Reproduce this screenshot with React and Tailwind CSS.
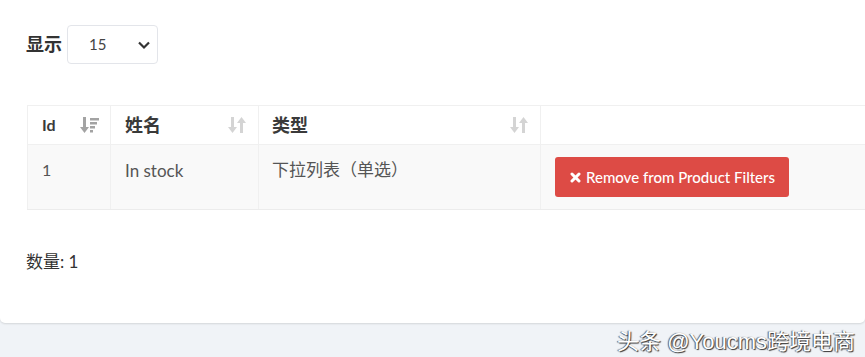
import React from "react";

const font = { fontFamily: 'Lato, "Noto Sans CJK SC", sans-serif' };

function SortBoth() {
  return (
    <svg width="18" height="20" viewBox="0 0 18 20" fill="#d4d4d4">
      <rect x="3" y="2" width="3" height="12" />
      <polygon points="0,12 9,12 4.5,18" />
      <rect x="12" y="6" width="3" height="12" />
      <polygon points="9,8 18,8 13.5,2" />
    </svg>
  );
}

function SortDesc() {
  return (
    <svg width="20" height="20" viewBox="0 0 20 20" fill="#a3a3a3">
      <rect x="3" y="2" width="3" height="12" />
      <polygon points="0,12 9,12 4.5,18" />
      <rect x="10" y="3" width="9" height="2.5" />
      <rect x="10" y="7" width="7" height="2.5" />
      <rect x="10" y="11" width="5" height="2.5" />
      <rect x="10" y="15" width="3" height="2.5" />
    </svg>
  );
}

export default function App() {
  return (
    <div className="w-[865px] h-[357px] bg-[#f0f3f7] overflow-hidden relative" style={font}>
      <div className="bg-white h-[323px] rounded-b-[5px] shadow-[0_1px_2px_rgba(0,0,0,0.12)] pl-[26px] pt-[25px]">
        <div className="flex items-center gap-[5px]">
          <span className="text-[18px] font-bold text-[#333]">显示</span>
          <div className="w-[91px] h-[39px] border border-[#e3e5ea] rounded-[4px] flex items-center justify-between pl-[21px] pr-[6px]">
            <span className="text-[15px] text-[#444]">15</span>
            <svg width="14" height="14" viewBox="0 0 14 14" fill="none" stroke="#333" strokeWidth="2.2">
              <polyline points="2,4.5 7,9.5 12,4.5" />
            </svg>
          </div>
        </div>

        <div className="mt-[41px] ml-[1px] flex flex-col">
          <div className="flex h-[40px] border-t border-b border-[#f0f0f0] bg-white">
            <div className="w-[84px] border-l border-r border-[#f0f0f0] flex items-center justify-between pl-[14px] pr-[10px]">
              <span className="text-[16px] font-bold text-[#3a3a3a]">Id</span>
              <SortDesc />
            </div>
            <div className="w-[148px] border-r border-[#f0f0f0] flex items-center justify-between pl-[14px] pr-[12px]">
              <span className="text-[18px] font-bold text-[#3a3a3a]">姓名</span>
              <SortBoth />
            </div>
            <div className="w-[282px] border-r border-[#f0f0f0] flex items-center justify-between pl-[13px] pr-[12px]">
              <span className="text-[18px] font-bold text-[#3a3a3a]">类型</span>
              <SortBoth />
            </div>
            <div className="flex-1" />
          </div>
          <div className="flex h-[65px] border-b border-[#ececec] bg-[#f9f9f9]">
            <div className="w-[84px] border-l border-r border-[#f0f0f0] pl-[14px] pt-[13px] text-[16px] text-[#555]">1</div>
            <div className="w-[148px] border-r border-[#f0f0f0] pl-[14px] pt-[13px] text-[17px] text-[#555]">In stock</div>
            <div className="w-[282px] border-r border-[#f0f0f0] pl-[13px] pt-[12px] text-[17px] text-[#555]">下拉列表（单选）</div>
            <div className="flex-1 pl-[14px] pt-[12px]">
              <div className="w-[234px] h-[40px] bg-[#dd4b45] rounded-[3px] flex items-center gap-[5px] pl-[15px] text-white text-[15px] font-medium">
                <svg width="11" height="11" viewBox="0 0 11 11" stroke="white" strokeWidth="3" strokeLinecap="round">
                  <line x1="2" y1="2" x2="9" y2="9" />
                  <line x1="9" y1="2" x2="2" y2="9" />
                </svg>
                <span>Remove from Product Filters</span>
              </div>
            </div>
          </div>
        </div>

        <div className="mt-[39px] text-[17px] text-[#333]">数量: 1</div>
      </div>
      <div
        className="absolute right-[10px] top-[325px] text-[22px] text-white"
        style={{ fontFamily: '"Liberation Sans", "Noto Sans CJK SC", sans-serif', textShadow: "1px 1px 1px #333, -1px 0 1px #555" }}
      >
        头条 @Youcms跨境电商
      </div>
    </div>
  );
}
